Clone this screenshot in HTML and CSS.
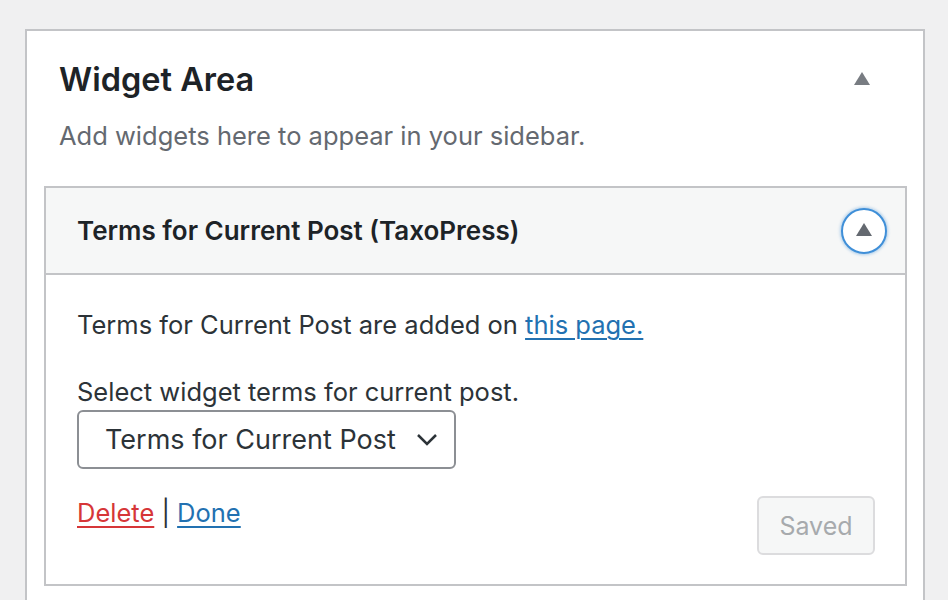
FILE: index.html
```html
<!DOCTYPE html>
<html>

<head>
  <title>Widget Area</title>
  <meta charset="utf-8" />
  <link rel="stylesheet" href="styles.css">
</head>

<body>
  <!-- sidebar holder -->
  <div class="sidebar">

    <div class="sidebar-head">
      <h2 class="sidebar-title">Widget Area</h2>
      <svg class="arrow" width="16" height="13" viewBox="0 0 16 13"><polygon points="8,0 16,13 0,13" /></svg>
    </div>
    <p class="sidebar-desc">Add widgets here to appear in your sidebar.</p>

    <!-- widget -->
    <div class="widget">
      <div class="widget-top">
        <h3 class="widget-title">Terms for Current Post (TaxoPress)</h3>
        <span class="toggle">
          <svg width="16" height="13" viewBox="0 0 16 13"><polygon points="8,0 16,13 0,13" /></svg>
        </span>
      </div>

      <div class="widget-inside">
        <p class="note">Terms for Current Post are added on <a href="#">this page.</a></p>
        <p class="label">Select widget terms for current post.</p>
        <div class="select">
          <span>Terms for Current Post</span>
          <svg width="22" height="14" viewBox="0 0 22 14"><polyline points="2,2 11,11 20,2" /></svg>
        </div>

        <div class="widget-control">
          <div class="links">
            <a href="#" class="delete">Delete</a> | <a href="#">Done</a>
          </div>
          <button class="saved" disabled>Saved</button>
        </div>
      </div>
    </div>

  </div>
</body>
</html>
```

FILE: styles.css
```css
* {
  margin: 0px;
  padding: 0px;
  box-sizing: border-box;
}

body {
  background: #f0f0f1;
  font-family: Inter, "Liberation Sans", sans-serif;
  color: #2c3338;
  overflow: hidden;
}

.sidebar {
  margin: 29px 24px 0 25px;
  width: 900px;
  height: 571px;
  border: 2px solid #c3c4c7;
  border-bottom: none;
  background: #fff;
  padding: 0 16px 0 17px;
}

.sidebar-head {
  display: flex;
  justify-content: space-between;
  align-items: center;
  margin-top: 29px;
  padding: 0 37px 0 15px;
}

.sidebar-title {
  font-size: 32.5px;
  font-weight: 600;
  line-height: 40px;
  color: #1d2327;
}

.arrow {
  fill: #787c82;
  margin-bottom: 4px;
}

.sidebar-desc {
  margin-top: 20px;
  padding-left: 15px;
  font-size: 25.5px;
  line-height: 32px;
  color: #646970;
}

.widget {
  margin-top: 34px;
  border: 2px solid #c3c4c7;
}

.widget-top {
  display: flex;
  justify-content: space-between;
  align-items: center;
  height: 87px;
  background: #f6f7f7;
  border-bottom: 2px solid #c3c4c7;
  padding: 0 18px 0 31px;
}

.widget-title {
  font-size: 26px;
  font-weight: 600;
  color: #1d2327;
}

.toggle {
  display: flex;
  align-items: center;
  justify-content: center;
  width: 46px;
  height: 46px;
  border-radius: 50%;
  border: 2px solid #3f8fd8;
  box-shadow: 0 0 3px 1px rgba(63, 143, 216, 0.4);
  background: #fff;
  padding-bottom: 3px;
}

.toggle svg {
  fill: #646970;
}

.widget-inside {
  padding: 33px 30px 29px 31px;
}

.note,
.label {
  font-size: 25.5px;
  line-height: 34px;
}

.label {
  margin-top: 33px;
}

a {
  color: #2271b1;
  text-decoration-thickness: 2px;
  text-underline-offset: 4px;
}

a.delete {
  color: #d63638;
}

.select {
  display: flex;
  align-items: center;
  justify-content: space-between;
  width: 379px;
  height: 59px;
  margin-top: 1px;
  border: 2px solid #8c8f94;
  border-radius: 6px;
  padding: 0 16px 0 26px;
  font-size: 27px;
  color: #2c3338;
}

.select svg {
  fill: none;
  stroke: #2c3338;
  stroke-width: 2.5;
}

.widget-control {
  display: flex;
  justify-content: space-between;
  align-items: flex-start;
  margin-top: 27px;
}

.links {
  font-size: 25.5px;
  line-height: 34px;
}

.saved {
  width: 118px;
  height: 59px;
  font-family: inherit;
  font-size: 25px;
  color: #a7aaad;
  background: #f6f7f7;
  border: 2px solid #dcdcde;
  border-radius: 6px;
}
```
